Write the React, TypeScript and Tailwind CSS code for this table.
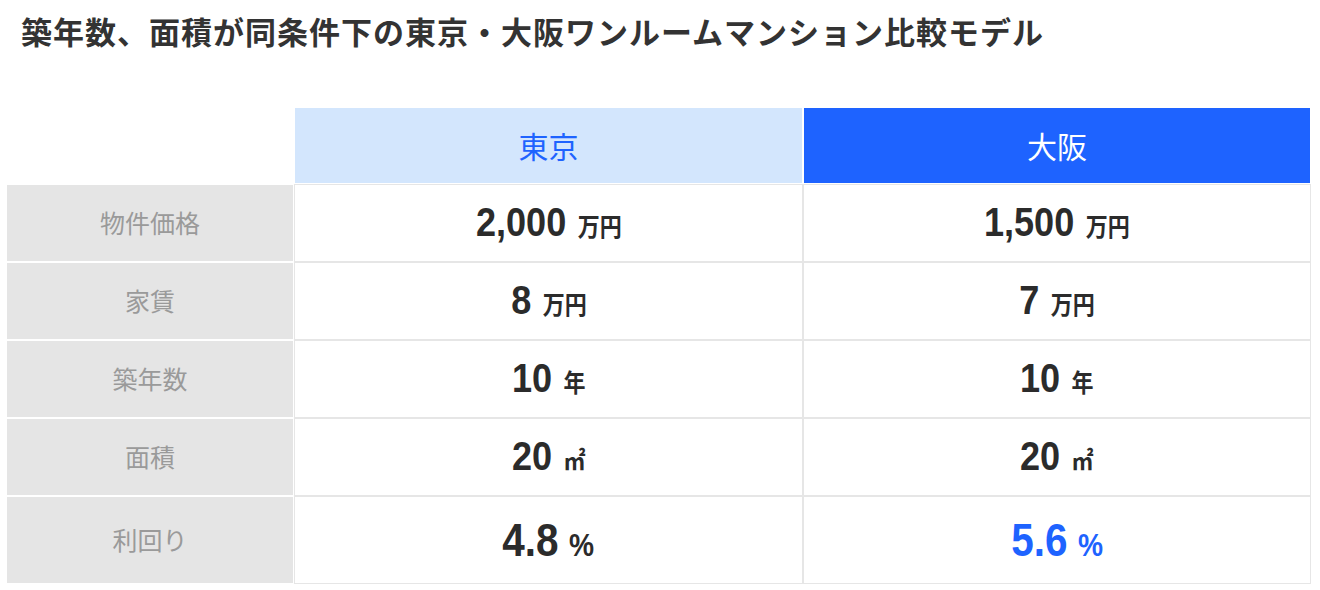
import React from "react";

type Row = {
  label: string;
  tokyo: string;
  osaka: string;
  unit: string;
  last?: boolean;
};

const rows: Row[] = [
  { label: "物件価格", tokyo: "2,000", osaka: "1,500", unit: "万円" },
  { label: "家賃", tokyo: "8", osaka: "7", unit: "万円" },
  { label: "築年数", tokyo: "10", osaka: "10", unit: "年" },
  { label: "面積", tokyo: "20", osaka: "20", unit: "㎡" },
  { label: "利回り", tokyo: "4.8", osaka: "5.6", unit: "%", last: true },
];

const jp = "font-['Noto_Sans_CJK_JP','Noto_Sans',sans-serif]";
const num = "font-['Liberation_Sans','Arial',sans-serif]";

const Value = ({ value, unit, last, blue }: { value: string; unit: string; last?: boolean; blue?: boolean }) => (
  <td
    className={`border border-[#e6e6e6] bg-white text-center align-middle ${last ? "h-[88px]" : "h-[78px]"} ${
      blue ? "text-[#1e63ff]" : "text-[#2b2b2b]"
    }`}
  >
    <span className="inline-block origin-center scale-x-[0.88]">
      <span className={`${num} font-bold ${last ? "text-[46px]" : "text-[41px]"}`}>{value}</span>
      {unit === "%" ? (
        <span className={`${num} ml-[12px] text-[32px] font-bold`}>%</span>
      ) : (
        <span className={`${jp} ml-[13px] text-[25px] font-bold`}>{unit}</span>
      )}
    </span>
  </td>
);

const App = () => {
  return (
    <div className={`w-[1320px] h-[590px] bg-white ${jp}`}>
      <h1 className="pl-[21px] pt-[11px] text-[31px] leading-[40px] font-bold tracking-[1px] text-[#333]">
        築年数、面積が同条件下の東京・大阪ワンルームマンション比較モデル
      </h1>
      <table className="ml-[6px] mt-[56px] w-[1305px] table-fixed border-separate border-spacing-0">
        <colgroup>
          <col className="w-[288px]" />
          <col className="w-[509px]" />
          <col className="w-[508px]" />
        </colgroup>
        <thead>
          <tr>
            <th className="h-[77px]"></th>
            <th className="h-[77px] border border-white bg-[#d3e6fd] text-[30px] font-normal text-[#1e63ff]">
              東京
            </th>
            <th className="h-[77px] border border-white bg-[#1e63ff] text-[30px] font-normal text-white">
              大阪
            </th>
          </tr>
        </thead>
        <tbody>
          {rows.map((r) => (
            <tr key={r.label}>
              <td className="border border-white bg-[#e5e5e5] text-center align-middle text-[25px] text-[#9a9a9a]">
                {r.label}
              </td>
              <Value value={r.tokyo} unit={r.unit} last={r.last} />
              <Value value={r.osaka} unit={r.unit} last={r.last} blue={r.last} />
            </tr>
          ))}
        </tbody>
      </table>
    </div>
  );
};

export default App;
